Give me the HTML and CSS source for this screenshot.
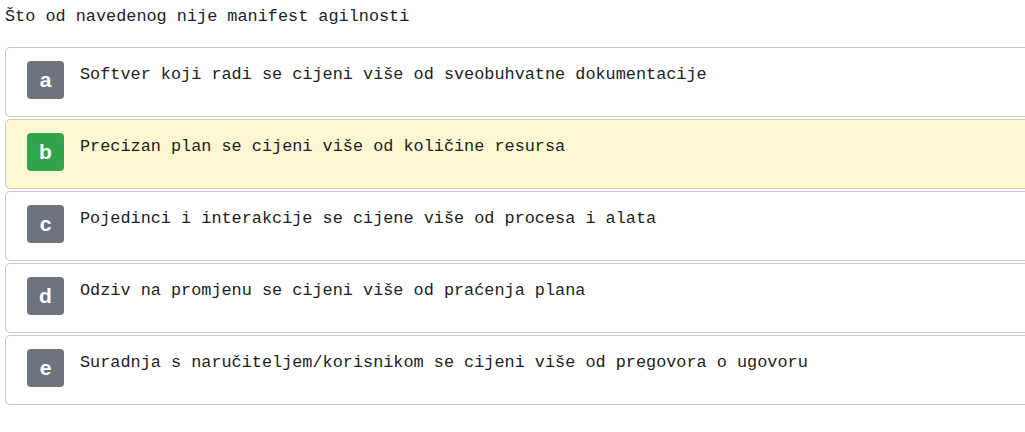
FILE: index.html
```html
<!DOCTYPE html>
<html lang="hr">
<head>
<meta charset="utf-8">
<title>Pitanje</title>
<link rel="stylesheet" href="styles.css">
</head>
<body>
<div class="page">
  <div class="question">Što od navedenog nije manifest agilnosti</div>
  <div class="answers">
    <div class="answer">
      <span class="badge">a</span>
      <span class="text">Softver koji radi se cijeni više od sveobuhvatne dokumentacije</span>
    </div>
    <div class="answer answer-correct">
      <span class="badge badge-correct">b</span>
      <span class="text">Precizan plan se cijeni više od količine resursa</span>
    </div>
    <div class="answer">
      <span class="badge">c</span>
      <span class="text">Pojedinci i interakcije se cijene više od procesa i alata</span>
    </div>
    <div class="answer">
      <span class="badge">d</span>
      <span class="text">Odziv na promjenu se cijeni više od praćenja plana</span>
    </div>
    <div class="answer">
      <span class="badge">e</span>
      <span class="text">Suradnja s naručiteljem/korisnikom se cijeni više od pregovora o ugovoru</span>
    </div>
  </div>
</div>
</body>
</html>
```

FILE: styles.css
```css
html, body {
  margin: 0;
  padding: 0;
  background: #ffffff;
  overflow: hidden;
}

.page {
  padding: 4px 0 0 5px;
  width: 1060px;
  font-family: "Liberation Mono", "Courier New", monospace;
  font-size: 16.85px;
  color: #222222;
}

.question {
  line-height: 26px;
  margin-bottom: 17px;
}

.answers {
  display: flex;
  flex-direction: column;
  gap: 2px;
}

.answer {
  display: flex;
  align-items: flex-start;
  height: 68px;
  box-sizing: content-box;
  border: 1px solid #c9c9c9;
  border-radius: 5px;
  padding: 0 0 0 21px;
  background: #ffffff;
}

.answer-correct {
  background: #fdf8d1;
  border-color: #cfcdb4;
}

.badge {
  flex: none;
  width: 37px;
  height: 38px;
  margin-top: 13px;
  margin-right: 16px;
  border-radius: 4px;
  background: #6c747e;
  color: #ffffff;
  font-family: "Liberation Sans", Arial, sans-serif;
  font-weight: bold;
  font-size: 21px;
  line-height: 38px;
  text-align: center;
}

.badge-correct {
  background: #2ea54c;
}

.text {
  margin-top: 13px;
  line-height: 27px;
  white-space: nowrap;
}
```
